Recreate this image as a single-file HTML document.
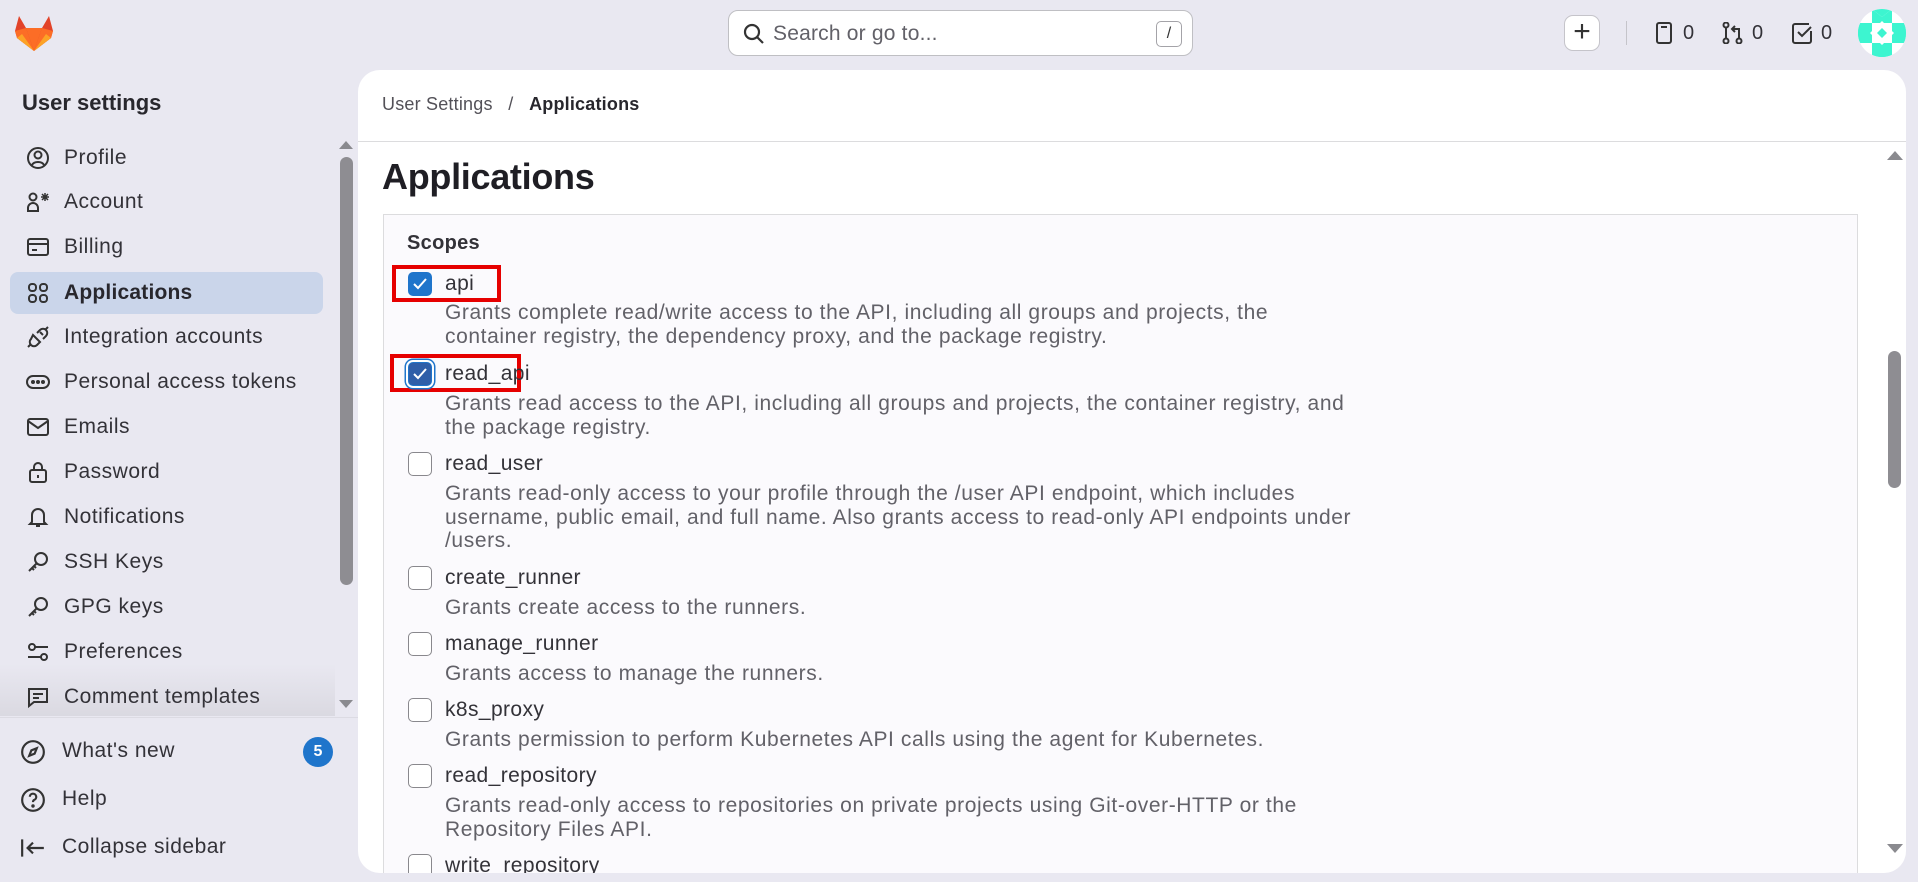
<!DOCTYPE html>
<html><head><meta charset="utf-8"><style>
*{box-sizing:border-box;margin:0;padding:0}
body{width:1918px;height:882px;overflow:hidden;background:#e9e8f1;font-family:"Liberation Sans",sans-serif;color:#333238;position:relative}
.abs{position:absolute}
.search{left:728px;top:10px;width:465px;height:46px;background:#fff;border:1px solid #bfbfc3;border-radius:10px}
.search span{position:absolute;left:44px;top:11px;font-size:21px;color:#626168;letter-spacing:0.2px}
.kbd{position:absolute;right:10px;top:10px;width:26px;height:26px;border:1px solid #a4a3a8;border-radius:5px;font-size:16px;text-align:center;line-height:24px;color:#333}
.side-title{left:22px;top:90px;font-size:22px;font-weight:bold;color:#28272d}
.item{position:absolute;left:10px;width:313px;height:42px;border-radius:8px;font-size:21px;line-height:42px;padding-left:54px;color:#333238;letter-spacing:0.5px}
.item svg{position:absolute;left:16px;top:9px}
.item.act{background:#cad5ea;font-weight:bold;color:#28272d;letter-spacing:0.2px}
.main{left:358px;top:70px;width:1548px;height:803px;background:#fff;border-radius:22px;overflow:hidden}
.bc{position:absolute;left:24px;top:24px;font-size:18px;color:#535158;letter-spacing:0.2px}
.bc b{color:#28272d}
.hr{position:absolute;left:0;right:0;top:71px;border-top:1px solid #dcdcde}
h1{position:absolute;left:24px;top:86px;font-size:36px;color:#1f1e24;letter-spacing:-0.3px}
.box{position:absolute;left:25px;top:144px;width:1475px;height:700px;background:#fbfafd;border:1px solid #dcdcde}
.cb{position:absolute;left:24px;width:24px;height:24px;border:1.5px solid #89888d;border-radius:5px;background:#fff}
.cb.on{background:#1f75cb;border-color:#1f75cb}
.lbl{position:absolute;left:61px;font-size:21px;color:#333238;white-space:nowrap;letter-spacing:0.4px}
.desc{position:absolute;left:61px;font-size:21px;line-height:23.7px;color:#626168;white-space:nowrap;letter-spacing:0.6px}
.red{position:absolute;border:4px solid #e60000}
.num{position:absolute;top:22px;font-size:20px}
</style></head><body>
<svg class="abs" style="left:14px;top:14px" width="40" height="38" viewBox="0 0 40 38"><path d="M20 37 L3 24 L1 17 L5 2 L12 14 L28 14 L35 2 L39 17 L37 24 Z" fill="#e24329"/><path d="M20 37 L12 14 L28 14 Z" fill="#fc6d26"/><path d="M20 37 L3 24 L1 17 L12 14 Z M20 37 L37 24 L39 17 L28 14Z" fill="#fc6d26"/><path d="M20 37 L3 24 L8 20 Z M20 37 L37 24 L32 20Z" fill="#fca326"/></svg>
<div class="abs search"><svg style="position:absolute;left:13px;top:11px" width="24" height="24" viewBox="0 0 24 24" fill="none" stroke="#333" stroke-width="2.2"><circle cx="10" cy="10" r="7"/><path d="M15 15l6 6"/></svg><span>Search or go to...</span><div class="kbd">/</div></div>
<div class="abs" style="left:1564px;top:15px;width:36px;height:36px;background:#fff;border:1px solid #c5c4ca;border-radius:9px;font-size:30px;line-height:32px;text-align:center;color:#333">+</div>
<div class="abs" style="left:1626px;top:21px;width:1px;height:24px;background:#c5c4ca"></div>
<svg class="abs" style="left:1656px;top:22px" width="16" height="22" viewBox="0 0 16 22" fill="none" stroke="#333" stroke-width="2"><rect x="1" y="1" width="14" height="20" rx="2"/><path d="M5 5h6"/></svg>
<div class="num" style="left:1683px">0</div>
<svg class="abs" style="left:1722px;top:22px" width="22" height="22" viewBox="0 0 22 22" fill="none" stroke="#333" stroke-width="2"><circle cx="4" cy="3" r="2.5"/><circle cx="4" cy="19" r="2.5"/><circle cx="17" cy="19" r="2.5"/><path d="M4 6v10M17 16V7h-6M13 4l-3 3 3 3"/></svg>
<div class="num" style="left:1752px">0</div>
<svg class="abs" style="left:1791px;top:22px" width="22" height="22" viewBox="0 0 22 22" fill="none" stroke="#333" stroke-width="2"><path d="M20 9v10a2 2 0 0 1-2 2H4a2 2 0 0 1-2-2V4a2 2 0 0 1 2-2h14"/><path d="M7 10l4 4 9-9"/></svg>
<div class="num" style="left:1821px">0</div>
<svg class="abs" style="left:1858px;top:9px" width="48" height="48" viewBox="0 0 48 48"><defs><clipPath id="c"><circle cx="24" cy="24" r="24"/></clipPath></defs><g clip-path="url(#c)"><rect width="48" height="48" fill="#fff"/><g fill="#3df5d0"><path d="M14 0h20l-10 8zM0 14l8 10-8 10zM48 14l-8 10 8 10zM14 48h20l-10-8z"/><path d="M14 0l10 8 10-8 0 14H14zM0 14h14v20H0zM34 14h14v20H34zM14 34h20v14H14z"/></g><g fill="#fff"><path d="M24 12l5 5-5 5-5-5zM24 26l5 5-5 5-5-5zM17 19l5 5-5 5-5-5zM31 19l5 5-5 5-5-5z"/><path d="M14 14l10 10-10 10zM34 14L24 24l10 10z" opacity="0"/></g><g fill="#3df5d0"><path d="M24 19l5 5-5 5-5-5z"/></g></g></svg>

<div class="abs side-title">User settings</div>
<svg class="abs" style="left:339px;top:139px" width="14" height="10"><path d="M0 10L7 2 14 10z" fill="#8a8a8f"/></svg>
<div class="abs" style="left:340px;top:157px;width:13px;height:428px;background:#8e8d92;border-radius:7px"></div>
<svg class="abs" style="left:339px;top:700px" width="14" height="10"><path d="M0 0L7 8 14 0z" fill="#8a8a8f"/></svg>

<div class="item" style="top:137px"><svg width="24" height="24" viewBox="0 0 24 24" fill="none" stroke="#333" stroke-width="2"><circle cx="12" cy="12" r="10"/><circle cx="12" cy="9" r="3.5"/><path d="M6 19c2-4 10-4 12 0"/></svg>Profile</div>
<div class="item" style="top:181px"><svg width="26" height="24" viewBox="0 0 26 24" fill="none" stroke="#333" stroke-width="2"><circle cx="7" cy="7" r="3.5"/><path d="M2 21v-3a5 5 0 0 1 10 0v3z"/><path d="M19 3v8M15 7h8M16 4l6 6M22 4l-6 6" stroke-width="1.5"/></svg>Account</div>
<div class="item" style="top:226px"><svg width="24" height="24" viewBox="0 0 24 24" fill="none" stroke="#333" stroke-width="2"><rect x="2" y="4" width="20" height="16" rx="2"/><path d="M2 9h20M6 15h5"/></svg>Billing</div>
<div class="item act" style="top:272px"><svg width="24" height="24" viewBox="0 0 24 24" fill="none" stroke="#333" stroke-width="2"><rect x="3" y="3" width="7" height="7" rx="3"/><rect x="14" y="3" width="7" height="7" rx="3"/><rect x="3" y="14" width="7" height="7" rx="3"/><rect x="14" y="14" width="7" height="7" rx="3"/></svg>Applications</div>
<div class="item" style="top:316px"><svg width="24" height="24" viewBox="0 0 24 24" fill="none" stroke="#333" stroke-width="2"><path d="M7 10l7 7-3 3a4 4 0 0 1-6-6zM14 7l3 3M17 14l3-3a4 4 0 0 0-6-6l-3 3M2 22l3-3M19 5l3-3"/></svg>Integration accounts</div>
<div class="item" style="top:361px"><svg width="24" height="24" viewBox="0 0 24 24" fill="none" stroke="#333" stroke-width="2"><rect x="1" y="6" width="22" height="12" rx="6"/><circle cx="7" cy="12" r="1" fill="#333"/><circle cx="12" cy="12" r="1" fill="#333"/><circle cx="17" cy="12" r="1" fill="#333"/></svg>Personal access tokens</div>
<div class="item" style="top:406px"><svg width="24" height="24" viewBox="0 0 24 24" fill="none" stroke="#333" stroke-width="2"><rect x="2" y="4" width="20" height="16" rx="2"/><path d="M2 6l10 7 10-7"/></svg>Emails</div>
<div class="item" style="top:451px"><svg width="24" height="24" viewBox="0 0 24 24" fill="none" stroke="#333" stroke-width="2"><rect x="4" y="10" width="16" height="12" rx="2"/><path d="M8 10V7a4 4 0 0 1 8 0v3M12 15v3"/></svg>Password</div>
<div class="item" style="top:496px"><svg width="24" height="24" viewBox="0 0 24 24" fill="none" stroke="#333" stroke-width="2"><path d="M6 17V10a6 6 0 0 1 12 0v7l2 2H4zM10 21h4"/></svg>Notifications</div>
<div class="item" style="top:541px"><svg width="24" height="24" viewBox="0 0 24 24" fill="none" stroke="#333" stroke-width="2"><circle cx="15" cy="9" r="6"/><path d="M11 13l-8 8M6 18l2 2M8 16l2 2"/></svg>SSH Keys</div>
<div class="item" style="top:586px"><svg width="24" height="24" viewBox="0 0 24 24" fill="none" stroke="#333" stroke-width="2"><circle cx="15" cy="9" r="6"/><path d="M11 13l-8 8M6 18l2 2M8 16l2 2"/></svg>GPG keys</div>
<div class="item" style="top:631px"><svg width="24" height="24" viewBox="0 0 24 24" fill="none" stroke="#333" stroke-width="2"><circle cx="6" cy="7" r="3"/><circle cx="18" cy="17" r="3"/><path d="M9 7h13M2 17h13"/></svg>Preferences</div>
<div class="abs" style="left:0;top:664px;width:335px;height:52px;background:linear-gradient(#e9e8f1,#dad9e1)"></div>
<div class="item" style="top:676px"><svg width="24" height="24" viewBox="0 0 24 24" fill="none" stroke="#333" stroke-width="2"><path d="M3 4h18v13H8l-5 4z"/><path d="M7 9h10M7 13h6"/></svg>Comment templates</div>
<div class="abs" style="left:0;top:717px;width:358px;border-top:1px solid #dcdbe3"></div>
<div class="item" style="top:730px;padding-left:52px"><svg style="left:10px" width="26" height="26" viewBox="0 0 24 24" fill="none" stroke="#333" stroke-width="2"><circle cx="12" cy="12" r="10"/><path d="M15.5 8.5l-2 5-5 2 2-5z"/></svg>What's new</div>
<div class="abs" style="left:303px;top:737px;width:30px;height:30px;border-radius:50%;background:#1f75cb;color:#fff;font-weight:bold;font-size:16px;text-align:center;line-height:30px">5</div>
<div class="item" style="top:778px;padding-left:52px"><svg style="left:10px" width="26" height="26" viewBox="0 0 24 24" fill="none" stroke="#333" stroke-width="2"><circle cx="12" cy="12" r="10"/><path d="M9 9a3 3 0 1 1 4 3c-1 .5-1 1-1 2"/><circle cx="12" cy="17.5" r=".6" fill="#333"/></svg>Help</div>
<div class="item" style="top:826px;padding-left:52px"><svg style="left:10px" width="26" height="26" viewBox="0 0 24 24" fill="none" stroke="#333" stroke-width="2"><path d="M2 4v16M22 12H7M12 7l-5 5 5 5"/></svg>Collapse sidebar</div>

<div class="abs main">
<div class="bc">User Settings &nbsp;&nbsp;/&nbsp;&nbsp; <b>Applications</b></div>
<div class="hr"></div>
<h1>Applications</h1>
<svg class="abs" style="left:1529px;top:80px" width="16" height="10"><path d="M0 10L8 1 16 10z" fill="#8a8a8f"/></svg>
<div class="abs" style="left:1530px;top:281px;width:13px;height:137px;background:#8e8d92;border-radius:7px"></div>
<svg class="abs" style="left:1529px;top:774px" width="16" height="10"><path d="M0 0L8 9 16 0z" fill="#8a8a8f"/></svg>
<div class="box">
<div class="abs" style="left:23px;top:17px;font-size:20px;font-weight:bold;color:#333238;letter-spacing:0.3px">Scopes</div>
<div class="red" style="left:8px;top:50px;width:109px;height:37px"></div>
<div class="red" style="left:6px;top:139px;width:131px;height:38px"></div>
<div class="cb on" style="top:57px"><svg width="21" height="21" viewBox="0 0 21 21"><path d="M5 11l4 4 8-9" fill="none" stroke="#fff" stroke-width="2"/></svg></div>
<div class="lbl" style="top:57px">api</div>
<div class="desc" style="top:86px">Grants complete read/write access to the API, including all groups and projects, the<br>container registry, the dependency proxy, and the package registry.</div>
<div class="cb on" style="top:147px;background:#2f5ea8;box-shadow:0 0 0 2px #fff,0 0 0 3.5px #1f75cb"><svg width="21" height="21" viewBox="0 0 21 21"><path d="M5 11l4 4 8-9" fill="none" stroke="#fff" stroke-width="2"/></svg></div>
<div class="lbl" style="top:147px">read_api</div>
<div class="desc" style="top:177px">Grants read access to the API, including all groups and projects, the container registry, and<br>the package registry.</div>
<div class="cb" style="top:237px"></div>
<div class="lbl" style="top:237px">read_user</div>
<div class="desc" style="top:267px">Grants read-only access to your profile through the /user API endpoint, which includes<br>username, public email, and full name. Also grants access to read-only API endpoints under<br>/users.</div>
<div class="cb" style="top:351px"></div>
<div class="lbl" style="top:351px">create_runner</div>
<div class="desc" style="top:381px">Grants create access to the runners.</div>
<div class="cb" style="top:417px"></div>
<div class="lbl" style="top:417px">manage_runner</div>
<div class="desc" style="top:447px">Grants access to manage the runners.</div>
<div class="cb" style="top:483px"></div>
<div class="lbl" style="top:483px">k8s_proxy</div>
<div class="desc" style="top:513px">Grants permission to perform Kubernetes API calls using the agent for Kubernetes.</div>
<div class="cb" style="top:549px"></div>
<div class="lbl" style="top:549px">read_repository</div>
<div class="desc" style="top:579px">Grants read-only access to repositories on private projects using Git-over-HTTP or the<br>Repository Files API.</div>
<div class="cb" style="top:639px"></div>
<div class="lbl" style="top:639px">write_repository</div>
</div>
</div>
</body></html>
